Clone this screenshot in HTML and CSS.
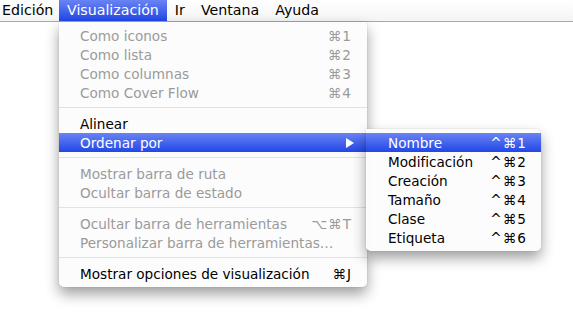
FILE: index.html
```html
<!DOCTYPE html>
<html lang="es">
<head>
    <meta charset="UTF-8">
    <title>Visualización</title>
    <link rel="stylesheet" href="styles.css">
</head>
<body>
    <div class="menubar">
        <div class="bar-item first">Edición</div>
        <div class="bar-item active">Visualización</div>
        <div class="bar-item">Ir</div>
        <div class="bar-item">Ventana</div>
        <div class="bar-item">Ayuda</div>
    </div>

    <div class="menu main-menu">
        <div class="item disabled"><span>Como iconos</span><span class="key">⌘1</span></div>
        <div class="item disabled"><span>Como lista</span><span class="key">⌘2</span></div>
        <div class="item disabled"><span>Como columnas</span><span class="key">⌘3</span></div>
        <div class="item disabled"><span>Como Cover Flow</span><span class="key">⌘4</span></div>
        <div class="sep"></div>
        <div class="item"><span>Alinear</span></div>
        <div class="item selected"><span>Ordenar por</span><span class="arrow"></span></div>
        <div class="sep"></div>
        <div class="item disabled"><span>Mostrar barra de ruta</span></div>
        <div class="item disabled"><span>Ocultar barra de estado</span></div>
        <div class="sep"></div>
        <div class="item disabled"><span>Ocultar barra de herramientas</span><span class="key">⌥⌘T</span></div>
        <div class="item disabled"><span>Personalizar barra de herramientas…</span></div>
        <div class="sep"></div>
        <div class="item"><span>Mostrar opciones de visualización</span><span class="key">⌘J</span></div>
    </div>

    <div class="menu sub-menu">
        <div class="item selected"><span>Nombre</span><span class="key">^⌘1</span></div>
        <div class="item"><span>Modificación</span><span class="key">^⌘2</span></div>
        <div class="item"><span>Creación</span><span class="key">^⌘3</span></div>
        <div class="item"><span>Tamaño</span><span class="key">^⌘4</span></div>
        <div class="item"><span>Clase</span><span class="key">^⌘5</span></div>
        <div class="item"><span>Etiqueta</span><span class="key">^⌘6</span></div>
    </div>
</body>
</html>
```

FILE: styles.css
```css
body {
    margin: 0;
    padding: 0;
    background-color: #ffffff;
    font-family: "DejaVu Sans", "Liberation Sans", sans-serif;
    font-size: 13.6px;
    color: #000000;
    width: 573px;
    height: 320px;
    overflow: hidden;
    position: relative;
}

.menubar {
    display: flex;
    height: 21px;
    font-size: 14.2px;
    background: linear-gradient(#ffffff, #f4f4f4);
    border-bottom: 1px solid #a8a8a8;
}

.bar-item {
    padding: 0 8px;
    line-height: 21px;
}

.bar-item.first {
    width: 57px;
    padding: 0 0 0 2px;
    overflow: hidden;
    white-space: nowrap;
}

.bar-item.active {
    color: #ffffff;
    background: linear-gradient(#6a83f4, #2147e6);
}

.menu {
    position: absolute;
    background-color: rgba(252, 252, 252, 0.97);
    padding: 4px 0;
    box-shadow: 0 7px 14px rgba(0, 0, 0, 0.38), 0 0 1px rgba(0, 0, 0, 0.35);
}

.main-menu {
    left: 59px;
    top: 22px;
    width: 308px;
    border-radius: 0 0 5px 5px;
}

.sub-menu {
    left: 366px;
    top: 129px;
    width: 175px;
    border-radius: 0 5px 5px 5px;
}

.item {
    display: flex;
    justify-content: space-between;
    align-items: center;
    height: 19px;
    padding: 0 15px 0 21px;
}

.sub-menu .item {
    padding: 0 14px 0 22px;
}

.item.disabled {
    color: #9a9a9a;
}

.item.selected {
    color: #ffffff;
    background: linear-gradient(#6a83f4, #2147e6);
}

.key {
    letter-spacing: 1px;
}

.arrow {
    width: 0;
    height: 0;
    margin-right: -2px;
    border-top: 5px solid transparent;
    border-bottom: 5px solid transparent;
    border-left: 8px solid #ffffff;
}

.sep {
    height: 1px;
    margin: 5px 0 6px;
    background-color: #e2e2e2;
}
```
